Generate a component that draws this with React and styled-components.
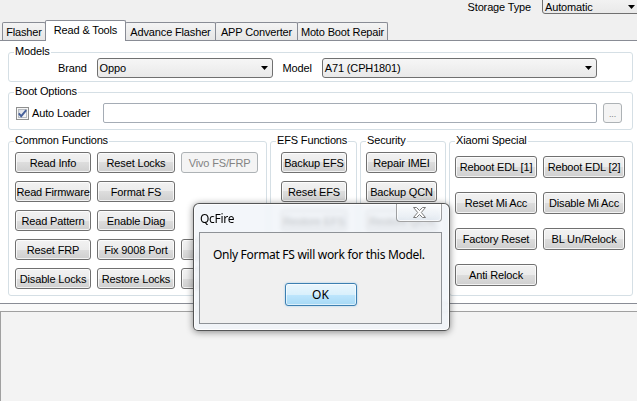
import React from 'react';
import styled, { createGlobalStyle } from 'styled-components';

const GlobalStyle = createGlobalStyle`
  html, body { margin: 0; padding: 0; background: #f0f0f0; }
  body { font-family: "Liberation Sans", Arial, sans-serif; font-size: 11px; color: #000; }
  * { box-sizing: border-box; }
`;

const Window = styled.div`
  position: relative;
  width: 637px;
  height: 401px;
  overflow: hidden;
  background: #f0f0f0;
  display: flex;
  flex-direction: column;
  letter-spacing: -0.15px;
`;

const TopBar = styled.div`
  height: 20px;
  flex: none;
  display: flex;
  justify-content: flex-end;
  align-items: flex-start;
  margin-right: -3px;
`;

const TopLabel = styled.span`
  line-height: 14px;
  margin-right: 11px;
`;

const Combo = styled.div`
  flex: none;
  display: flex;
  align-items: center;
  justify-content: space-between;
  width: ${p => p.$w}px;
  height: ${p => p.$h || 20}px;
  margin-top: ${p => p.$mt || 0}px;
  padding: ${p => (p.$mt ? '6px' : '0')} 4px 0 2px;
  border: 1px solid #707070;
  border-radius: 3px;
  background: linear-gradient(#f6f6f6, #e9e9e9);
`;

const Arrow = () => (
  <svg width="7" height="4" viewBox="0 0 7 4"><polygon points="0,0 7,0 3.5,4" fill="#000" /></svg>
);

const TabStrip = styled.div`
  height: 20px;
  flex: none;
  display: flex;
  align-items: flex-end;
  padding-left: 2px;
  position: relative;
  z-index: 1;
`;

const Tab = styled.div`
  width: ${p => p.$w}px;
  height: ${p => (p.$active ? 21 : 18)}px;
  margin-bottom: ${p => (p.$active ? -1 : 0)}px;
  margin-left: -1px;
  &:first-child { margin-left: 0; }
  display: flex;
  align-items: center;
  justify-content: center;
  padding-bottom: ${p => (p.$active ? 2 : 0)}px;
  border: 1px solid #898c95;
  border-bottom: none;
  border-radius: 2px 2px 0 0;
  background: ${p => (p.$active ? '#ffffff' : 'linear-gradient(#f4f4f4, #e6e6e6)')};
  position: relative;
  z-index: ${p => (p.$active ? 2 : 1)};
  white-space: nowrap;
`;

const TabPage = styled.div`
  height: 264px;
  flex: none;
  background: #ffffff;
  border-top: 1px solid #898c95;
  border-bottom: 1px solid #898c95;
  padding: 11px 4px 0 8px;
  display: flex;
  flex-direction: column;
`;

const Group = styled.div`
  margin-top: ${p => p.$mt || 0}px;
  padding-bottom: ${p => p.$pb || 0}px;
  border: 1px solid #d5dfe5;
  border-radius: 3px;
  flex: ${p => (p.$w ? `0 0 ${p.$w}px` : p.$grow ? '1 1 auto' : 'none')};
  min-width: 0;
`;

const GroupTitle = styled.div`
  width: fit-content;
  margin: -7px 0 0 5px;
  padding: 0 1px;
  height: 11px;
  line-height: 11px;
  background: #ffffff;
  white-space: nowrap;
`;

const ModelsRow = styled.div`
  display: flex;
  align-items: center;
  height: 20px;
  margin: 1px 0 0 49px;
`;

const FieldLabel = styled.span`
  margin-right: 10px;
`;

const ComboSpacer = styled.span`
  width: 10px;
  flex: none;
`;

const BootRow = styled.div`
  display: flex;
  align-items: center;
  height: 20px;
  margin: 6px 0 0 7px;
`;

const CheckLabel = styled.span`
  margin-left: 3px;
  width: 71px;
  flex: none;
`;

const TextBox = styled.div`
  width: 494px;
  height: 20px;
  border: 1px solid #a5acb5;
  border-radius: 2px;
  background: #fff;
`;

const SmallBtn = styled.div`
  width: 19px;
  height: 20px;
  margin-left: 6px;
  border: 1px solid #adb2b5;
  border-radius: 3px;
  background: #f4f4f4;
  color: #838383;
  font-size: 9px;
  display: flex;
  align-items: flex-end;
  justify-content: center;
  padding-bottom: 3px;
  line-height: 9px;
`;

const FuncRow = styled.div`
  display: flex;
  gap: 3px;
  margin-top: 11px;
  height: 155px;
  flex: none;
`;

const ButtonGrid = styled.div`
  display: grid;
  grid-template-columns: ${p => p.$cols};
  grid-auto-rows: ${p => p.$rowH || 21}px;
  column-gap: ${p => p.$colGap || 6}px;
  row-gap: ${p => p.$rowGap || 8}px;
  padding: ${p => p.$pt || 6}px 0 0 ${p => p.$pl || 6}px;
`;

const Btn = styled.button`
  font: inherit;
  letter-spacing: inherit;
  color: #000;
  height: 100%;
  width: 100%;
  padding: 0;
  border: 1px solid #707070;
  border-radius: 3px;
  background: linear-gradient(#f2f2f2 0%, #ebebeb 50%, #dddddd 50%, #cfcfcf 100%);
  box-shadow: inset 0 0 0 1px rgba(255, 255, 255, 0.75);
  white-space: nowrap;
  overflow: hidden;
  &:disabled {
    border-color: #adb2b5;
    background: #f4f4f4;
    color: #838383;
    box-shadow: none;
  }
`;

const BottomArea = styled.div`
  flex: 1;
  display: flex;
  flex-direction: column;
  padding-top: 7px;
  background: #f9f9f9;
`;

const LogBox = styled.div`
  flex: 1;
  background: #f3f3f3;
  border-top: 1px solid #a0a0a0;
  border-left: 1px solid #a0a0a0;
`;

const Dialog = styled.div`
  position: absolute;
  left: 193px;
  top: 203px;
  width: 257px;
  height: 128px;
  display: flex;
  flex-direction: column;
  padding: 0 7px 6px 5px;
  border: 1px solid rgba(40, 40, 40, 0.78);
  border-radius: 6px 6px 5px 5px;
  background: rgba(240, 244, 249, 0.8);
  backdrop-filter: blur(2px);
  box-shadow: 0 1px 7px rgba(0, 0, 0, 0.45), inset 0 0 0 1px rgba(255, 255, 255, 0.85);
  font-family: "Noto Sans", "Liberation Sans", sans-serif;
  font-size: 12px;
  letter-spacing: -0.3px;
  z-index: 10;
`;

const DialogHead = styled.div`
  height: 28px;
  flex: none;
  display: flex;
  align-items: flex-start;
`;

const DialogTitle = styled.span`
  align-self: center;
  padding-left: 1px;
  margin-top: 1px;
`;

const CloseBtn = styled.div`
  margin-left: auto;
  width: 46px;
  height: 18px;
  display: flex;
  align-items: center;
  justify-content: center;
  border: 1px solid rgba(90, 90, 90, 0.55);
  border-top: none;
  border-radius: 0 0 4px 4px;
  background: linear-gradient(rgba(255, 255, 255, 0.75), rgba(225, 232, 240, 0.75));
  box-shadow: inset 0 0 0 1px rgba(255, 255, 255, 0.7);
`;

const DialogBody = styled.div`
  flex: 1;
  display: flex;
  flex-direction: column;
  padding: 14px 13px 0;
  border: 1px solid #8e9297;
  background: #f0f0f0;
`;

const Message = styled.div`
  line-height: 16px;
  white-space: nowrap;
`;

const OkBtn = styled.button`
  align-self: center;
  margin-top: 20px;
  width: 72px;
  height: 23px;
  padding: 0;
  font: inherit;
  letter-spacing: 0;
  color: #000;
  border: 1px solid #3c7fb1;
  border-radius: 3px;
  background: linear-gradient(#eaf6fd 0%, #d9f0fc 50%, #bee6fd 50%, #a7d9f5 100%);
  box-shadow: inset 0 0 0 1px rgba(255, 255, 255, 0.6), 0 0 2px rgba(60, 160, 230, 0.5);
`;

const CheckIcon = () => (
  <svg width="13" height="13" viewBox="0 0 13 13">
    <defs>
      <linearGradient id="cbg" x1="0" y1="0" x2="1" y2="1">
        <stop offset="0" stopColor="#d8dce2" />
        <stop offset="1" stopColor="#fbfbfb" />
      </linearGradient>
    </defs>
    <rect x="0.5" y="0.5" width="12" height="12" fill="#f6f6f6" stroke="#8e8f8f" />
    <rect x="2.5" y="2.5" width="8" height="8" fill="url(#cbg)" stroke="#b8bcc2" />
    <path d="M2.8 6.4 L5.2 9.2 L10.2 3.2" fill="none" stroke="#46609a" strokeWidth="1.9" />
  </svg>
);

const CloseIcon = () => (
  <svg width="13" height="11" viewBox="0 0 13 11">
    <polygon
      points="0.5,0.5 3.5,0.5 6.5,3.5 9.5,0.5 12.5,0.5 8.3,5.5 12.5,10.5 9.5,10.5 6.5,7.5 3.5,10.5 0.5,10.5 4.7,5.5"
      fill="#ffffff"
      stroke="#7a7a7a"
      strokeWidth="1"
      strokeLinejoin="round"
    />
  </svg>
);

const tabs = [
  { label: 'Flasher', w: 44 },
  { label: 'Read & Tools', w: 81, active: true },
  { label: 'Advance Flasher', w: 91 },
  { label: 'APP Converter', w: 83 },
  { label: 'Moto Boot Repair', w: 91 },
];

const common = [
  'Read Info', 'Reset Locks', { label: 'Vivo FS/FRP', disabled: true },
  'Read Firmware', 'Format FS', null,
  'Read Pattern', 'Enable Diag', null,
  'Reset FRP', 'Fix 9008 Port', '',
  'Disable Locks', 'Restore Locks', '',
];

const renderCells = items =>
  items.map((it, i) => {
    if (it === null) return <span key={i} />;
    if (typeof it === 'object') return <Btn key={i} disabled={it.disabled}>{it.label}</Btn>;
    return <Btn key={i}>{it}</Btn>;
  });

export default function App() {
  return (
    <>
      <GlobalStyle />
      <Window>
        <TopBar>
          <TopLabel>Storage Type</TopLabel>
          <Combo $w={98} $h={21} $mt={-7}>
            <span>Automatic</span>
            <Arrow />
          </Combo>
        </TopBar>

        <TabStrip>
          {tabs.map(t => (
            <Tab key={t.label} $w={t.w} $active={t.active}>{t.label}</Tab>
          ))}
        </TabStrip>

        <TabPage>
          <Group $pb={3}>
            <GroupTitle>Models</GroupTitle>
            <ModelsRow>
              <FieldLabel>Brand</FieldLabel>
              <Combo $w={176}>
                <span>Oppo</span>
                <Arrow />
              </Combo>
              <ComboSpacer />
              <FieldLabel>Model</FieldLabel>
              <Combo $w={275}>
                <span>A71 (CPH1801)</span>
                <Arrow />
              </Combo>
            </ModelsRow>
          </Group>

          <Group $mt={10} $pb={6}>
            <GroupTitle>Boot Options</GroupTitle>
            <BootRow>
              <CheckIcon />
              <CheckLabel>Auto Loader</CheckLabel>
              <TextBox />
              <SmallBtn>...</SmallBtn>
            </BootRow>
          </Group>

          <FuncRow>
            <Group $w={259}>
              <GroupTitle>Common Functions</GroupTitle>
              <ButtonGrid $cols="76px 78px 77px" $pl={6}>
                {renderCells(common)}
              </ButtonGrid>
            </Group>
            <Group $w={87}>
              <GroupTitle>EFS Functions</GroupTitle>
              <ButtonGrid $cols="66px" $pl={10}>
                {renderCells(['Backup EFS', 'Reset EFS', 'Restore EFS'])}
              </ButtonGrid>
            </Group>
            <Group $w={86}>
              <GroupTitle>Security</GroupTitle>
              <ButtonGrid $cols="71px" $pl={5}>
                {renderCells(['Repair IMEI', 'Backup QCN', 'Restore QCN'])}
              </ButtonGrid>
            </Group>
            <Group $grow>
              <GroupTitle>Xiaomi Special</GroupTitle>
              <ButtonGrid $cols="82px 82px" $pl={5} $pt={10} $rowH={22} $rowGap={14}>
                {renderCells([
                  'Reboot EDL [1]', 'Reboot EDL [2]',
                  'Reset Mi Acc', 'Disable Mi Acc',
                  'Factory Reset', 'BL Un/Relock',
                  'Anti Relock',
                ])}
              </ButtonGrid>
            </Group>
          </FuncRow>
        </TabPage>

        <BottomArea>
          <LogBox />
        </BottomArea>

        <Dialog>
          <DialogHead>
            <DialogTitle>QcFire</DialogTitle>
            <CloseBtn><CloseIcon /></CloseBtn>
          </DialogHead>
          <DialogBody>
            <Message>Only Format FS will work for this Model.</Message>
            <OkBtn>OK</OkBtn>
          </DialogBody>
        </Dialog>
      </Window>
    </>
  );
}
